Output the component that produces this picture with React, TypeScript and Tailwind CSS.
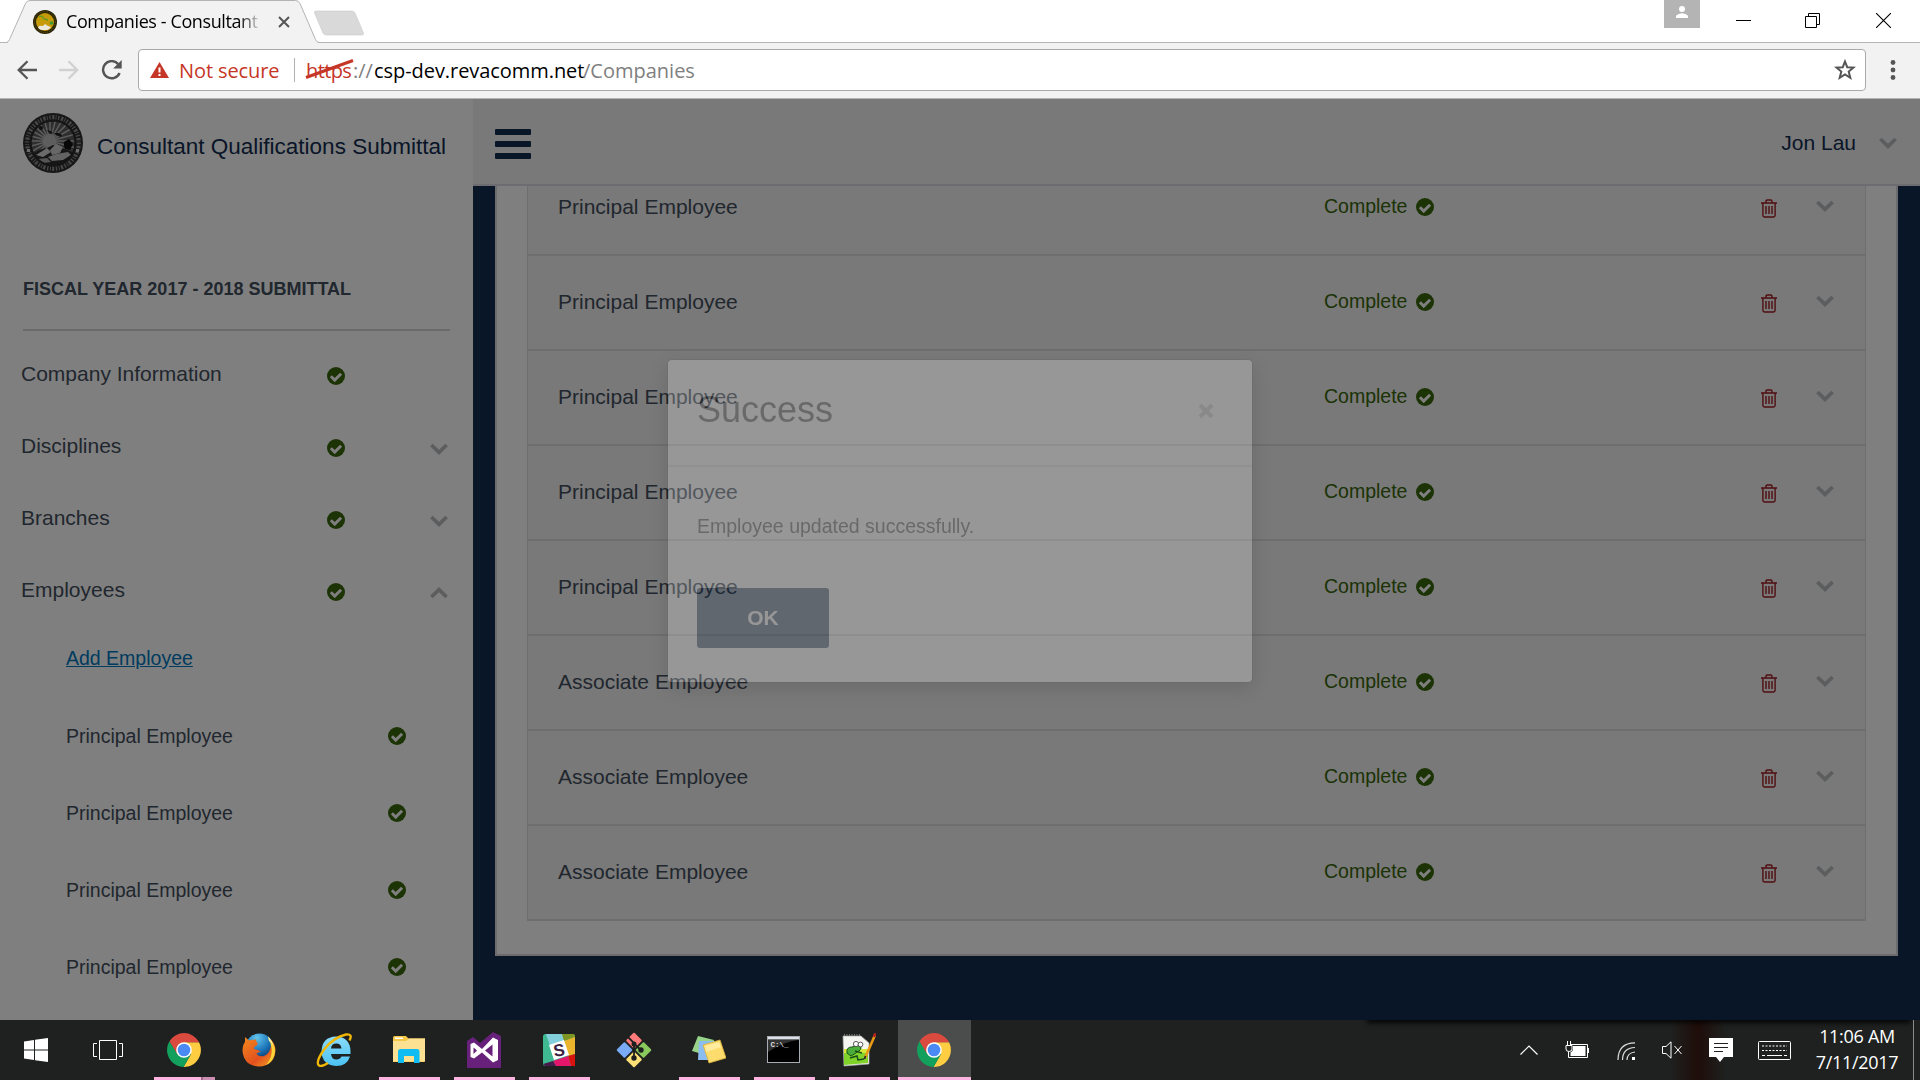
import React from "react";

const sans = "font-['Liberation_Sans',Arial,sans-serif]";
const segoe = "font-['Open_Sans','Noto_Sans',sans-serif]";

function Check() {
  return (
    <svg className="block h-[18px] w-[18px] shrink-0" viewBox="0 0 18 18">
      <circle cx="9" cy="9" r="9" fill="#38660a" />
      <path d="M3.9 9.3 7.7 13.1 14.1 6.7" fill="none" stroke="#fff" strokeWidth="2.9" />
    </svg>
  );
}

function Chevron({ up = false, className = "" }: { up?: boolean; className?: string }) {
  return (
    <svg className={`block h-3 w-[18px] shrink-0 ${className}`} viewBox="0 0 18 12">
      <path d={up ? "M1.4 10 9 2.6 16.6 10" : "M1.4 2 9 9.4 16.6 2"} fill="none" stroke="#b9babc" strokeWidth="3.7" />
    </svg>
  );
}

function Trash() {
  return (
    <svg className="block h-[19px] w-4 shrink-0" viewBox="0 0 16 19" fill="none" stroke="#a01c20" strokeWidth="1.4">
      <path d="M0 4h16M5 4V2.2Q5 1 6.2 1h3.6Q11 1 11 2.2V4M1.9 4v12.3Q1.9 18 3.5 18h9q1.6 0 1.6-1.7V4M5 7v8M8 7v8M11 7v8" />
    </svg>
  );
}

function SealSmall() {
  return (
    <svg className="h-6 w-6" viewBox="0 0 24 24">
      <circle cx="12" cy="12" r="12" fill="#2a2405" />
      <circle cx="12" cy="12" r="10.4" fill="none" stroke="#6b5b14" strokeWidth="1" strokeDasharray="1 1.2" />
      <circle cx="12" cy="12" r="9" fill="#c79a09" />
      <path d="M6 7l3-1 2 3 4 1" stroke="#5b9a20" strokeWidth="1.3" fill="none" />
      <circle cx="18.5" cy="13" r="1.8" fill="#3c9b2f" />
      <path d="M5 17q2-2 5-1l2-2 3 2 3 1q-2 3-4 3H9q-3 0-4-3z" fill="#ece8dc" />
    </svg>
  );
}

const rays = Array.from({ length: 24 }, (_, i) => i * 15);

function Seal() {
  return (
    <svg className="block h-[60px] w-[60px] shrink-0" viewBox="0 0 60 60">
      <defs>
        <clipPath id="seal-disc"><circle cx="30" cy="30" r="22" /></clipPath>
      </defs>
      <circle cx="30" cy="30" r="30" fill="#2e2e2e" />
      <circle cx="30" cy="30" r="25.8" fill="none" stroke="#8e8e8e" strokeWidth="4.2" strokeDasharray="1.3 1.7 2.2 1.3 0.9 1.6" />
      <circle cx="30" cy="30" r="22" fill="#5c5c5c" />
      <g clipPath="url(#seal-disc)">
        {rays.map((a) => (
          <path key={a} d="M27 2V22" stroke="#b8b8b8" strokeWidth="1.5" transform={`rotate(${a} 27 28)`} />
        ))}
        <circle cx="26.500" cy="28" r="6.800" fill="#bdbdbd" />
        <path d="M8 42Q16 36 24 35L30 32 42 36 52 40V54H8z" fill="#2c2c2c" />
        <path d="M13 42 24 35 28 39 20 44z" fill="#d6d6d6" />
        <path d="M27 37 33 31 40 34 37 40 29 42z" fill="#cecece" />
        <path d="M25 44 33 41 45 39 48 42 40 47 29 48z" fill="#c6c6c6" />
        <path d="M15 46 24 45 28 49 20 50z" fill="#a8a8a8" />
      </g>
      <circle cx="30" cy="30" r="22" fill="none" stroke="#262626" strokeWidth="1.200" />
      <circle cx="18" cy="15" r="2" fill="#222" />
      <path d="M24 17l4 1 2 2-3 1zM31 20l5 0 3 2-1 2-5-2z" fill="#222" />
      <path d="M41 29l5-3 4 5-3 6-5-1-1-3z" fill="#101010" />
      <rect x="4" y="36" width="3" height="3" fill="#ddd" />
      <rect x="53" y="36" width="3" height="3" fill="#ddd" />
    </svg>
  );
}

function BrowserChrome() {
  return (
    <header className={`h-[99px] shrink-0 bg-white ${segoe}`}>
      <div className="relative flex h-[43px] items-start">
        <svg className="absolute inset-0 h-[43px] w-full" viewBox="0 0 1920 43">
          <path d="M0 42.5H1920" stroke="#b4b4b4" />
          <path d="M7 43C9 42 9 41 10 39L25.500 3.500Q27 .5 30 .5H295.500Q298.500 .5 300 3.500L315.500 39C316.500 41 317 42 319 43z" fill="#f2f2f2" />
          <path d="M0 42.500H6.500Q8.500 42 9.500 39.500L25.500 3.500Q27 .5 30 .5H295.500Q298.500 .5 300 3.500L315.500 39.500Q316.500 42 319 42.500" fill="none" stroke="#b4b4b4" />
          <path d="M316 11H352Q354 11 355 13L363.500 33Q364 35 362 35H326Q324 35 323 33L314.500 13Q314 11 316 11z" fill="#d9d9d9" stroke="#c9c9c9" strokeWidth=".6" />
        </svg>
        <div className="relative flex h-11 w-[318px] items-center pl-[33px]">
          <SealSmall />
          <div className="-mt-px ml-[9px] w-[199px] whitespace-nowrap bg-gradient-to-r from-black from-85% to-[#f2f2f2] to-98% bg-clip-text text-[18px] tracking-[-0.4px] text-transparent">
            Companies - Consultant
          </div>
          <svg className="ml-[13px] h-3 w-3" viewBox="0 0 12 12"><path d="M1 1l10 10M11 1L1 11" stroke="#555" strokeWidth="2" /></svg>
        </div>
        <div className="relative ml-auto flex h-full w-[256px] items-start">
          <div className="flex h-7 w-9 justify-center bg-[#b4b4b4] pt-[6px]">
            <svg className="h-3 w-3" viewBox="0 0 12 12"><circle cx="6" cy="3" r="3" fill="#fff" /><path d="M0 12V9.800Q2 7.300 6 7.300T12 9.800V12z" fill="#fff" /></svg>
          </div>
          <svg className="ml-9 mt-[13px] h-[15px] w-[15px]" viewBox="0 0 15 15"><path d="M0 7.500H15" stroke="#000" /></svg>
          <svg className="ml-[54px] mt-[13px] h-[15px] w-[15px]" viewBox="0 0 15 15" fill="none" stroke="#000"><path d="M.5 3.500H11.500V14.500H.5zM3.500 3.500V.5H14.500V11.500H11.500" /></svg>
          <svg className="ml-14 mt-[13px] h-[15px] w-[15px]" viewBox="0 0 15 15"><path d="M0 0 15 15M15 0 0 15" stroke="#000" strokeWidth="1.100" /></svg>
        </div>
      </div>
      <div className="flex h-14 items-center border-b border-[#b4b4b4] bg-[#f2f2f2]">
        <svg className="-mt-px ml-[17px] h-5 w-5" viewBox="0 0 20 20" fill="none" stroke="#555" strokeWidth="2.300"><path d="M20 10H2M10.500 1.200 1.700 10l8.800 8.800" /></svg>
        <svg className="-mt-px ml-[22px] h-5 w-5" viewBox="0 0 20 20" fill="none" stroke="#d1d1d1" strokeWidth="2.300"><path d="M0 10H18M9.500 1.200 18.300 10l-8.800 8.800" /></svg>
        <svg className="-mt-px ml-[22px] h-[21px] w-[21px]" viewBox="0 0 21 21"><path d="M17.200 4.100A8.600 8.600 0 1 0 18.600 13" fill="none" stroke="#555" strokeWidth="2.400" /><path d="M20.700 0V8.500H12.200z" fill="#555" /></svg>
        <div className="-mt-px ml-4 flex h-[42px] w-[1728px] items-center rounded-[4px] border border-[#a9a9a9] bg-white text-[20px] leading-[28px]">
          <svg className="ml-[11px] h-4 w-[19px]" viewBox="0 0 19 16"><path d="M9.500 0 19 16H0z" fill="#c63626" /><path d="M9.500 5.500v5M9.500 12v2" stroke="#fff" strokeWidth="2" /></svg>
          <span className="ml-[10px] w-[104px] whitespace-nowrap pt-[2px] tracking-[-0.1px] text-[#c63626]">Not secure</span>
          <span className="ml-[11px] h-6 w-px bg-[#b0b0b0]" />
          <span className="relative ml-[11px] w-[47px] whitespace-nowrap pt-[2px] tracking-[-0.6px] text-[#c63626]">
            https
            <svg className="absolute -left-px top-[3px] h-[22px] w-[50px]" viewBox="0 0 50 22"><path d="M1 19.500 48 2.500" stroke="#c63626" strokeWidth="3" /></svg>
          </span>
          <span className="w-[21px] whitespace-nowrap pt-[2px] text-[#808080]">://</span>
          <span className="w-[209px] whitespace-nowrap pt-[2px] tracking-[-0.06px] text-black">csp-dev.revacomm.net</span>
          <span className="whitespace-nowrap pt-[2px] text-[#808080]">/Companies</span>
          <svg className="ml-auto mr-[9px] h-[22px] w-[22px]" viewBox="0 0 22 22"><path d="M11 2.500 13.200 8.200 19.500 8.600 14.700 12.600 16.300 18.800 11 15.400 5.700 18.800 7.300 12.600 2.500 8.600 8.800 8.200z" fill="none" stroke="#555" strokeWidth="2" /></svg>
        </div>
        <svg className="-mt-px ml-6 h-5 w-[6px]" viewBox="0 0 6 20" fill="#555"><circle cx="3" cy="2.500" r="2.400" /><circle cx="3" cy="10" r="2.400" /><circle cx="3" cy="17.500" r="2.400" /></svg>
      </div>
    </header>
  );
}

const nav: { label: string; arrow?: "up" | "down" }[] = [
  { label: "Company Information" },
  { label: "Disciplines", arrow: "down" },
  { label: "Branches", arrow: "down" },
  { label: "Employees", arrow: "up" },
];

function Sidebar() {
  return (
    <aside className="flex w-[473px] shrink-0 flex-col overflow-hidden bg-white text-[21px] text-[#434e5c]">
      <div className="flex h-[90px] items-center pl-[23px]">
        <span className="-mt-[2px]"><Seal /></span>
        <span className="ml-[14px] mt-[5px] whitespace-nowrap text-[22.5px] text-[#122c50]">Consultant Qualifications Submittal</span>
      </div>
      <div className="ml-[23px] mr-[23px] mt-[87px] h-[55px] border-b-2 border-[#d4d4d4] text-[18px] font-bold leading-[26px]">
        FISCAL YEAR 2017 - 2018 SUBMITTAL
      </div>
      <nav className="pt-[7px]">
        {nav.map((n) => (
          <div key={n.label} className="flex h-[72px] items-center pl-[21px]">
            <span className="w-[306px]">{n.label}</span>
            <span className="mt-[3px]"><Check /></span>
            {n.arrow && <Chevron up={n.arrow === "up"} className="ml-[85px] mt-[5px]" />}
          </div>
        ))}
      </nav>
      <div className="pl-[66px] text-[19.5px]">
        <div className="mb-2 flex h-16 items-center pt-px text-[#0077c0] underline">Add Employee</div>
        {[0, 1, 2, 3].map((i) => (
          <div key={i} className="flex h-[77px] items-center">
            <span className="w-[322px]">Principal Employee</span>
            <span className="-mt-px"><Check /></span>
          </div>
        ))}
      </div>
    </aside>
  );
}

const rows = ["Principal", "Principal", "Principal", "Principal", "Principal", "Associate", "Associate", "Associate"];

function Main() {
  return (
    <main className="flex min-w-0 flex-1 flex-col bg-[#122c50]">
      <div className="flex h-[87px] shrink-0 items-center border-b-2 border-[#d8d8e2] bg-[#f2f2f2] pl-[22px]">
        <div className="mt-[5px] flex flex-col gap-[6px]">
          <span className="h-[6px] w-9 rounded-[1px] bg-[#122c50]" />
          <span className="h-[6px] w-9 rounded-[1px] bg-[#122c50]" />
          <span className="h-[6px] w-9 rounded-[1px] bg-[#122c50]" />
        </div>
        <span className="ml-auto mt-[2px] text-[21px] text-[#122c50]">Jon Lau</span>
        <Chevron className="ml-[23px] mr-[23px] mt-[3px]" />
      </div>
      <div className="min-h-0 flex-1 overflow-hidden">
        <section className="-mt-[25px] ml-[22px] mr-[22px] border-2 border-t-0 border-[#d8d8de] bg-white px-[30px] pb-[33px]">
          <div className="border-x border-[#dcdcdf]">
            {rows.map((r, i) => (
              <div key={i} className="flex h-[95px] items-center border-b-2 border-[#dcdcdf] bg-[#f2f2f2] pb-[2px] pl-[30px] text-[21px] text-[#434e5c]">
                <span className="w-[766px]">{r} Employee</span>
                <span className="w-[92px] text-[19.5px] text-[#38660a]">Complete</span>
                <Check />
                <span className="ml-[327px] mt-[3px]"><Trash /></span>
                <Chevron className="-mt-px ml-[39px]" />
              </div>
            ))}
          </div>
        </section>
      </div>
    </main>
  );
}

function Modal() {
  return (
    <div className="absolute left-[667px] top-[260px] flex h-[324px] w-[586px] flex-col rounded-[5px] border border-black/20 bg-white bg-clip-padding opacity-[.224] shadow-[0_6px_19px_rgba(0,0,0,0.5)]">
      <div className="flex h-[107px] items-center justify-between border-b-2 border-[#e0e0e0] pl-[29px] pr-[38px] text-[#333]">
        <span className="-mt-[6px] text-[36px]">Success</span>
        <svg className="-mt-[3px] h-4 w-4" viewBox="0 0 16 16"><path d="M2 2l12 12M14 2 2 14" stroke="#c4c4c4" strokeWidth="4.200" /></svg>
      </div>
      <p className="mt-[45px] pl-[29px] text-[19.5px] leading-[28px] text-[#333]">Employee updated successfully.</p>
      <button className="ml-[29px] mt-[48px] h-[60px] w-[132px] rounded-[3px] bg-[#122c50] text-[21px] font-bold text-white">OK</button>
    </div>
  );
}

function Chrome() {
  return (
    <svg className="h-[34px] w-[34px]" viewBox="0 0 34 34">
      <path d="M17 9.200H32A17 17 0 0 1 16.500 34L24 21z" fill="#ffcd42" />
      <path d="M2.500 8.200A17 17 0 0 0 16.600 34L24 21 10 20z" fill="#12a05c" />
      <path d="M2.500 8.200 10.200 21 17 17V9.300H32L31.700 8.600A17 17 0 0 0 2.500 8.200z" fill="#db4a3f" />
      <circle cx="17" cy="17" r="7.800" fill="#fff" />
      <circle cx="17" cy="17" r="6.300" fill="#4a8af4" />
    </svg>
  );
}

function Firefox() {
  return (
    <svg className="h-[34px] w-[34px]" viewBox="0 0 34 34">
      <defs>
        <linearGradient id="ffx" x1="0" y1="0" x2="1" y2="1"><stop offset="0" stopColor="#f28a1c" /><stop offset=".6" stopColor="#e2511f" /><stop offset="1" stopColor="#f7a821" /></linearGradient>
        <radialGradient id="globe" cx=".4" cy=".15" r=".8"><stop offset="0" stopColor="#63c5ec" /><stop offset=".6" stopColor="#1b73b8" /><stop offset="1" stopColor="#0c3568" /></radialGradient>
      </defs>
      <circle cx="17.500" cy="14.500" r="14" fill="url(#globe)" />
      <path d="M3 4 7 7.500Q9 6.500 12 7L14 6Q14 9 16 10.500 15 13 12.500 13.500L12 16 16 17 19 19Q15 19.500 14.500 21 17 24 22 23 27 21 28.500 15 30 10 28.500 6 34 12 33.500 18 32 33 17 33.500 2 33 .5 18 .5 12 3 9z" fill="url(#ffx)" />
      <path d="M26 4.500Q34 11 33 19 32 28 24 32 31 24 29.500 15 29 9 26 4.500z" fill="#fbd43a" />
      <path d="M26 3.500Q30 7 31 12 29 9 27 8z" fill="#fff3a0" />
    </svg>
  );
}

function Explorer() {
  return (
    <svg className="h-[36px] w-[36px]" viewBox="0 0 36 36" fill="none">
      <defs>
        <linearGradient id="ie-e" x1="0" y1="0" x2="0" y2="1"><stop offset="0" stopColor="#8adcfb" /><stop offset="1" stopColor="#4cc2f2" /></linearGradient>
      </defs>
      <path d="M34.500 22H15Q15.500 27.500 20.500 27.500 24 27.500 25.500 24.500H34Q31 34 20 34 6 33 5.500 19.500 6 5 20 4.500 34 5 34.500 19zM15 16.500H25.500Q25 11.500 20.300 11.500 15.500 11.500 15 16.500z" fill="url(#ie-e)" fillRule="evenodd" />
      <path d="M33.500 8.500Q37 1.500 30 2.500 18 5 8.500 17-1 30 3 33.500 6 35 12 31" stroke="#f2b705" strokeWidth="2.400" />
    </svg>
  );
}

function Folder() {
  return (
    <svg className="h-7 w-8" viewBox="0 0 32 28">
      <path d="M0 1.500Q0 0 1.500 0H13l2.500 2.500H32V24.500Q32 26 30.500 26H0z" fill="#f5c747" />
      <path d="M0 5H13L16 2.500H32V25.500H0z" fill="#fde193" />
      <rect x="2" y="1.500" width="8" height="1.500" fill="#fff" />
      <path d="M5 15.500Q5 13 7.500 13H24Q26.500 13 26.500 15.500V27H21V20H11V27H5z" fill="#10bdf3" />
    </svg>
  );
}

function VisualStudio() {
  return (
    <svg className="h-9 w-[34px]" viewBox="0 0 34 36">
      <path d="M0 9 6 5 13 11 26 0 34 4V36H0z" fill="#68217a" />
      <path d="M3.500 12 7 10.500 15 17 26 5.500 31 8V28L26 30.500 15 20.500 7 26.500 3.500 25zM6.500 15.500V22L10 18.500zM18 18.500 25.500 24.500V12.500z" fill="#fff" fillRule="evenodd" />
    </svg>
  );
}

function Slack() {
  return (
    <svg className="h-8 w-8" viewBox="0 0 32 32">
      <rect width="32" height="32" rx="2.500" fill="#3eb991" />
      <path d="M3 0H20L22 8 7 12z" fill="#83cfdb" />
      <path d="M19 0H30Q32 0 32 3L21 7z" fill="#7d9522" />
      <path d="M21 7 32 3V20L25 22z" fill="#ecb32d" />
      <path d="M25 22 32 20V32H28z" fill="#d8130d" />
      <path d="M10 27 25 22 28 32H13z" fill="#e3166c" />
      <path d="M0 30 10 27 13 32H2z" fill="#471b4b" />
      <path d="M6 11 21 6 26 21 11 26z" fill="#fff" />
      <text x="16" y="22" textAnchor="middle" fontFamily="Liberation Sans" fontWeight="bold" fontSize="17" fill="#3b1f42" transform="rotate(-8 16 16)">S</text>
    </svg>
  );
}

function Git() {
  return (
    <svg className="h-9 w-9" viewBox="0 0 36 36">
      <g transform="rotate(45 18 18)">
        <rect x="5.500" y="5.500" width="11.500" height="11.500" rx="1" fill="#ff7b7b" />
        <rect x="19" y="5.500" width="11.500" height="11.500" rx="1" fill="#8ac95c" />
        <rect x="5.500" y="19" width="11.500" height="11.500" rx="1" fill="#7aabf7" />
        <rect x="19" y="19" width="11.500" height="11.500" rx="1" fill="#fce078" />
      </g>
      <path d="M12 5 18 11V26M18 12 25 18" stroke="#1e2020" strokeWidth="1.800" fill="none" />
      <circle cx="18" cy="12" r="2.500" fill="#1e2020" /><circle cx="25" cy="18" r="2.700" fill="#1e2020" /><circle cx="18" cy="26" r="2.700" fill="#1e2020" />
    </svg>
  );
}

function Sticky() {
  return (
    <svg className="h-7 w-[34px]" viewBox="0 0 34 28">
      <path d="M6 0 22 4 17 20 0 15z" fill="#97d48a" />
      <path d="M7 5H23V24H6z" fill="#8bbdf0" />
      <path d="M11 9 28 4 34 22 17 27z" fill="#fbdc6c" stroke="#d8b23b" strokeWidth=".8" />
      <path d="M13 10 27 6 29 11 14 16z" fill="#ffec9e" />
    </svg>
  );
}

function Cmd() {
  return (
    <svg className="h-[27px] w-[33px]" viewBox="0 0 33 27">
      <rect x=".5" y=".5" width="32" height="26" fill="#000" stroke="#a8adb4" />
      <rect x="1" y="1" width="31" height="2.500" fill="#dbe1e8" />
      <path d="M1 4H31Q16 6 1 16z" fill="#333" />
      <text x="3.500" y="10.500" fontFamily="Liberation Mono" fontSize="7.500" fontWeight="bold" fill="#ddd">C:\_</text>
    </svg>
  );
}

function NotepadPP() {
  return (
    <svg className="h-[34px] w-[34px]" viewBox="0 0 34 34">
      <path d="M1 3H19L27 10V31L2 33z" fill="#f4f4f0" stroke="#aaa" strokeWidth=".7" />
      <path d="M2 2H18" stroke="#777" strokeWidth="2" strokeDasharray="1 1.500" />
      <path d="M2 18H26V30L2 32z" fill="#7fd32a" /><path d="M2 16H26V20H2z" fill="#d6e838" />
      <path d="M5 20Q4 14 10 14L17 12Q21 15 17 18L9 23z" fill="#4cae3a" stroke="#174d18" strokeWidth="1" />
      <circle cx="14" cy="11" r="2.600" fill="#fff" stroke="#333" strokeWidth=".8" /><circle cx="18.500" cy="11.500" r="2.400" fill="#fff" stroke="#333" strokeWidth=".8" />
      <path d="M8 25 15 23 16 27 22 26M13 18 20 20" stroke="#184d18" strokeWidth="1.500" fill="none" />
      <path d="M33 2 23 25" stroke="#e89a16" strokeWidth="2.600" /><path d="M33.500 0 32 4" stroke="#b02222" strokeWidth="2.600" /><path d="M23.500 23 22.500 26" stroke="#222" strokeWidth="1.600" />
    </svg>
  );
}

const apps: { id: string; icon: () => React.ReactElement; run?: boolean; split?: boolean }[] = [
  { id: "chrome", icon: Chrome, run: true, split: true },
  { id: "firefox", icon: Firefox },
  { id: "ie", icon: Explorer },
  { id: "folder", icon: Folder, run: true },
  { id: "vs", icon: VisualStudio, run: true },
  { id: "slack", icon: Slack, run: true },
  { id: "git", icon: Git },
  { id: "sticky", icon: Sticky, run: true },
  { id: "cmd", icon: Cmd, run: true },
  { id: "npp", icon: NotepadPP, run: true },
];

function Taskbar() {
  return (
    <footer className={`relative flex h-[60px] shrink-0 overflow-hidden bg-[#1e2120] text-white ${segoe}`}>
      <div className="absolute left-[1670px] h-full w-[56px] bg-gradient-to-r from-transparent via-[#1f0d09] to-transparent" />
      <div className="absolute left-[1370px] right-[12px] top-[-6px] h-[6px] shadow-[0_0_5px_3px_rgba(0,0,0,0.8)]" />
      <div className="flex w-[72px] items-center justify-center">
        <svg className="h-6 w-6" viewBox="0 0 24 24" fill="#fff"><path d="M0 3.500 10 2V11.500H0zM11 1.800 24 0V11.500H11zM0 12.500H10V22L0 20.500zM11 12.500H24V24L11 22.200z" /></svg>
      </div>
      <div className="flex w-[75px] items-center justify-center pr-[3px]">
        <svg className="h-5 w-[30px]" viewBox="0 0 30 20" fill="none" stroke="#fff"><path d="M6.500 .5H23.500V19.500H6.500zM4 3.500H.5V16.500H4M26 3.500H29.500V16.500H26" /></svg>
      </div>
      {apps.map(({ id, icon: Icon, run, split }) => (
        <div key={id} className="relative flex w-[75px] items-center justify-center pb-px pr-[2px]">
          <Icon />
          {run && (
            <span className="absolute bottom-0 left-[7px] flex h-[3px] w-[61px] bg-[#ffb3e0]">
              {split && <><span className="ml-[47px] w-[2px] bg-[#9a6b88]" /><span className="flex-1 bg-[#cc8fb3]" /></>}
            </span>
          )}
        </div>
      ))}
      <div className="ml-[1px] flex w-[73px] items-center justify-center border-b-[3px] border-[#ffb3e0] bg-[#4b4d4c] pr-[2px] pt-[2px]"><Chrome /></div>
      <div className="relative ml-auto flex items-center">
        <svg className="mr-[27px] h-[10px] w-[18px]" viewBox="0 0 18 10" fill="none" stroke="#fff" strokeWidth="1.200"><path d="M.5 9.500 9 1l8.500 8.500" /></svg>
        <svg className="mr-[28px] h-[18px] w-6" viewBox="0 0 24 18" fill="none" stroke="#fff"><path d="M6 3.500H22.500V16.500H3.500V11M2.500 0V4M5.500 0V4M1 4.500H7V8Q7 10.500 4 10.500T1 8z" /><path d="M8 5H20.500V15H5.500V11.500Q8 10.500 8 8z" fill="#fff" stroke="none" /><path d="M23.500 7v5" /></svg>
        <svg className="mr-[27px] mt-[2px] h-[18px] w-[18px]" viewBox="0 0 18 18" fill="none" stroke="#ddd" strokeWidth="1.200"><path d="M1 18Q1 1 18 .8M5.500 18Q5.500 6 18 5.500M10 18Q10 11 18 10" /><rect x="15" y="15" width="3" height="3" fill="#fff" stroke="none" /></svg>
        <svg className="mr-[27px] h-[18px] w-5" viewBox="0 0 20 18" fill="none" stroke="#fff"><path d="M.5 5.500H4L9 .8V17.200L4 12.500H.5zM12.500 5l7 8M19.500 5l-7 8" /></svg>
        <svg className="mr-[25px] h-6 w-6" viewBox="0 0 24 24"><path d="M0 0H24V19H15L11 24 7 19H0z" fill="#fff" /><path d="M5 5.500H19M5 9.500H19M5 13.500H14" stroke="#1e2120" /></svg>
        <svg className="mr-[22px] h-[19px] w-[33px]" viewBox="0 0 33 19" fill="none" stroke="#fff"><rect x=".5" y=".5" width="32" height="18" rx="1" /><path d="M4 5H29M4 9.500H29" strokeDasharray="2 1.500" /><path d="M4 14.500H7M9 14.500H24M26 14.500H29" /></svg>
        <div className="mr-[12px] w-[88px] pb-[2px] text-center text-[18px] leading-[26px] tracking-[-0.3px]">
          <div>11:06 AM</div>
          <div>7/11/2017</div>
        </div>
        <div className="mr-[6px] h-[60px] w-px bg-[#8b8b8b]" />
      </div>
    </footer>
  );
}

export default function App() {
  return (
    <div className="flex h-[1080px] w-[1920px] flex-col overflow-hidden">
      <BrowserChrome />
      <div className={`relative flex min-h-0 flex-1 ${sans}`}>
        <Sidebar />
        <Main />
        <div className="absolute inset-0 bg-black/50" />
        <Modal />
      </div>
      <Taskbar />
    </div>
  );
}
